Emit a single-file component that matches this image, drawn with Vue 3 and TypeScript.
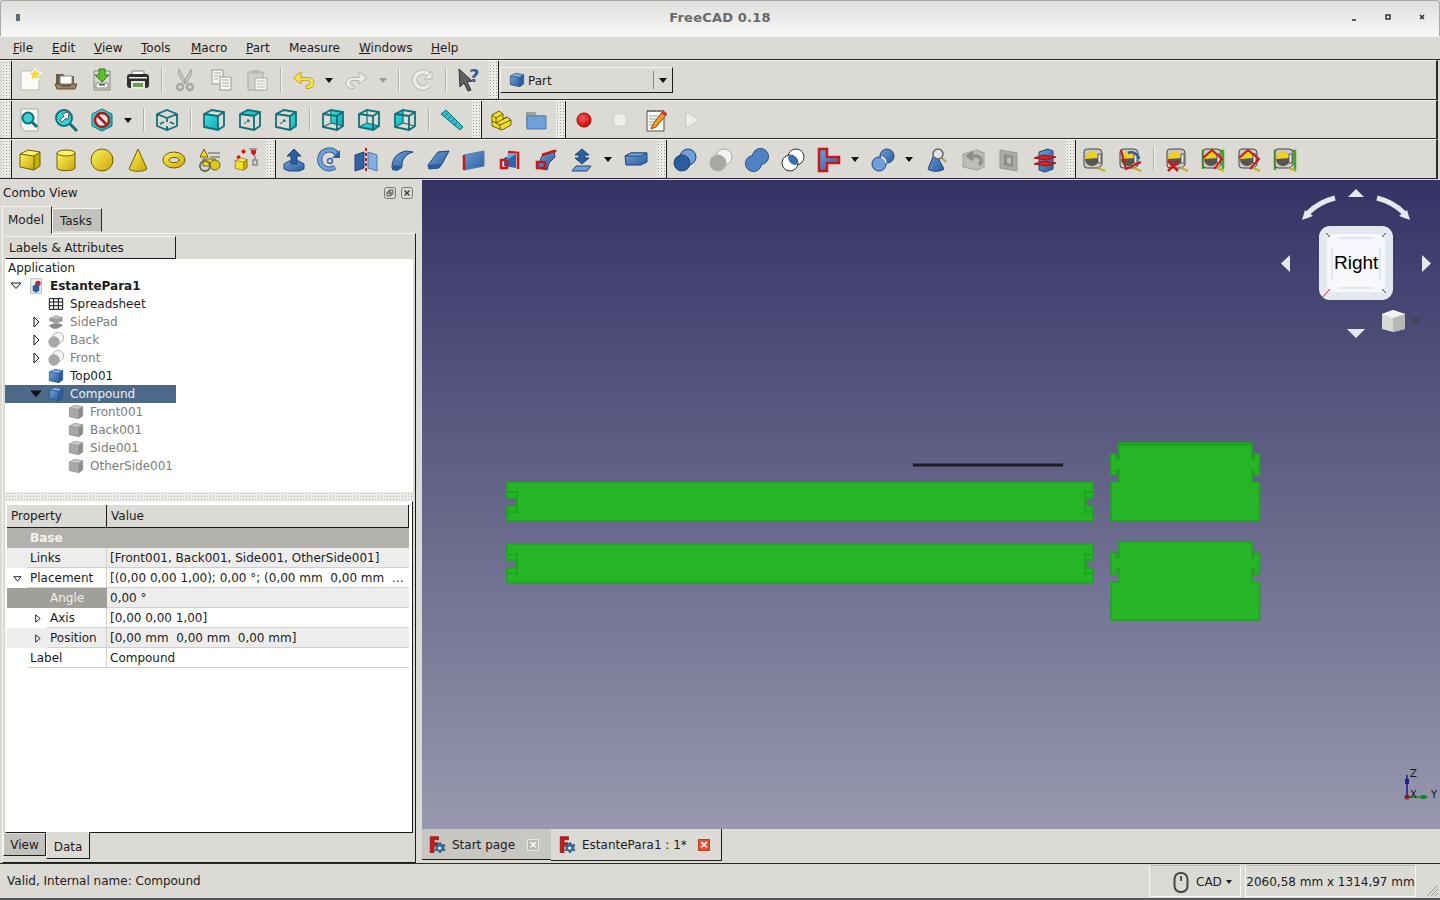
<template>
  <div class="window">
    <svg class="defs" width="0" height="0">
      <defs>
        <linearGradient id="gy" x1="0" y1="0" x2="1" y2="1"><stop offset="0" stop-color="#fff35e" /><stop offset="1" stop-color="#c9a506" /></linearGradient>
        <linearGradient id="gb" x1="0" y1="0" x2="1" y2="1"><stop offset="0" stop-color="#6f9fd8" /><stop offset="1" stop-color="#2a5c9e" /></linearGradient>
        <linearGradient id="gt" x1="0" y1="0" x2="1" y2="1"><stop offset="0" stop-color="#3fe4e4" /><stop offset="1" stop-color="#14a4ac" /></linearGradient>
        <radialGradient id="gr" cx="0.4" cy="0.35" r="0.7"><stop offset="0" stop-color="#ff5a5a" /><stop offset="1" stop-color="#c40000" /></radialGradient>
      </defs>
    </svg>

    <header class="titlebar">
      <span class="app-mark"></span>
      <span class="title">FreeCAD 0.18</span>
      <div class="win-buttons">
        <svg width="10" height="10" viewBox="0 0 10 10"><path d="M3 8h4" stroke="#333" stroke-width="1.6" /></svg>
        <svg width="10" height="10" viewBox="0 0 10 10"><path d="M3 3h4v4H3z" fill="none" stroke="#333" stroke-width="1.5" /></svg>
        <svg width="10" height="10" viewBox="0 0 10 10"><path d="M3 3l4 4M7 3l-4 4" stroke="#333" stroke-width="1.6" /></svg>
      </div>
    </header>

    <nav class="menubar">
      <span v-for="m in menus" :key="m.label" class="menu-item" :style="{ width: m.width + 'px' }"><u v-if="m.key">{{ m.label[0] }}</u>{{ m.key ? m.label.slice(1) : m.label }}</span>
    </nav>

    <div v-for="(bar, i) in toolbars" :key="i" class="toolbar" :class="'bar' + i">
      <template v-for="(item, j) in bar" :key="j">
        <span v-if="item === '#'" class="handle"></span>
        <span v-else-if="item === '##'" class="handle wide"></span>
        <span v-else-if="item === '|'" class="sep"></span>
        <span v-else-if="item === '|-'" class="sep narrow"></span>
        <span v-else-if="item === 'v'" class="drop"></span>
        <span v-else-if="item === 'v-'" class="drop dim"></span>
        <div v-else-if="item === 'combo'" class="combo-box">
          <svg class="ico16" viewBox="0 0 24 24" v-html="icons.cube"></svg>
          <span class="combo-text">Part</span>
          <span class="combo-arrow"></span>
        </div>
        <span v-else class="tool"><svg class="ico" viewBox="0 0 24 24" v-html="icons[item]"></svg></span>
      </template>
    </div>

    <div class="main">
      <aside class="combo">
        <div class="combo-title">
          <span>Combo View</span>
          <div class="dock-buttons">
            <svg width="12" height="12" viewBox="0 0 12 12"><rect x="0.5" y="0.5" width="11" height="11" rx="2" fill="none" stroke="#777" /><path d="M5 3h4v4H5zM3 5h4v4H3z" fill="none" stroke="#555" /></svg>
            <svg width="12" height="12" viewBox="0 0 12 12"><rect x="0.5" y="0.5" width="11" height="11" rx="2" fill="none" stroke="#777" /><path d="M3.5 3.5l5 5M8.5 3.5l-5 5" stroke="#444" stroke-width="1.5" /></svg>
          </div>
        </div>
        <div class="top-tabs">
          <span class="top-tab active">Model</span>
          <span class="top-tab">Tasks</span>
        </div>
        <div class="pane">
          <div class="tree-block">
            <div class="tree-head">Labels &amp; Attributes</div>
            <div class="tree">
              <div class="tree-app">Application</div>
              <div
                v-for="row in tree"
                :key="row.label"
                class="tree-row"
                :style="{ paddingLeft: (row.level - 1) * 20 + 1 + 'px' }"
              >
                <span class="tree-cell" :class="{ selected: row.selected }">
                  <span class="twist">
                    <svg v-if="row.twist" width="10" height="10" viewBox="0 0 10 10"><path :d="row.twist === 'right' ? 'M3 0l5 5-5 5z' : 'M0 2h10L5 7.500z'" :fill="row.selected ? '#111' : '#fff'" stroke="#111" /></svg>
                  </span>
                  <svg class="ico16" viewBox="0 0 24 24" v-html="icons[row.icon]"></svg>
                  <span class="tree-label" :class="{ bold: row.bold, grey: row.grey }">{{ row.label }}</span>
                </span>
              </div>
            </div>
          </div>
          <div class="splitter"></div>
          <div class="prop-frame">
            <div class="prop-head">
              <span class="prop-col1">Property</span>
              <span class="prop-col2">Value</span>
            </div>
            <div class="prop-group">Base</div>
            <div v-for="p in props" :key="p.name" class="prop-row" :class="{ alt: p.alt, picked: p.picked }">
              <span class="prop-name" :style="{ paddingLeft: p.level * 20 + 'px' }">
                <span class="prop-twist">
                  <svg v-if="p.twist" width="9" height="9" viewBox="0 0 10 10"><path :d="p.twist === 'right' ? 'M3 1l5 4-5 4z' : 'M1 3h8L5 8z'" fill="#fff" stroke="#111" /></svg>
                </span>
                <span class="prop-label">{{ p.name }}</span>
              </span>
              <span class="prop-value">{{ p.value }}</span>
            </div>
          </div>
          <div class="low-tabs">
            <span class="low-tab">View</span>
            <span class="low-tab active">Data</span>
          </div>
        </div>
      </aside>

      <section class="view-col">
        <div class="viewport">
          <svg class="parts" viewBox="422 180 1018 649">
            <g class="solid">
              <path v-for="d in solids" :key="d" :d="d" />
            </g>
            <g class="inner">
              <path v-for="d in innerLines" :key="d" :d="d" />
            </g>
            <path d="M913 465H1063" stroke="#1c1c1c" stroke-width="3" />
          </svg>

          <svg class="navi" viewBox="1270 180 170 170">
            <g fill="#e4e9f0">
              <path d="M1348 197l8-8 8 8zM1347 329h18l-9 9zM1290 255v17l-9-8.500zM1422 255v17l9-8.500z" />
              <path d="M1302 220l3-10 8 6zM1410 220l-3-10-8 6z" />
              <rect x="1319" y="226" width="74" height="74" rx="11" />
            </g>
            <path d="M1335 198q-16 4-27 15M1377 198q16 4 27 15" fill="none" stroke="#e4e9f0" stroke-width="5" />
            <path d="M1332 234h48l5 5v48l-5 5h-48l-5-5v-48z" fill="#f6f8fc" />
            <path d="M1339 238h34M1339 288h34M1332 247v32M1380 247v32" stroke="#cfd3e6" fill="none" />
            <path d="M1326 233l4 4M1386 233l-4 4M1386 293l-4-4" stroke="#3a3a6e" />
            <path d="M1330 289l-11 12" stroke="#d02030" />
            <path d="M1316 299l5 5M1321 299l-5 5" stroke="#e01010" />
            <path d="M1382 314l11-4 12 4v15l-12 3-11-3z" fill="#d8d8d4" />
            <path d="M1393 318l12-4v15l-12 3z" fill="#b8b8b4" />
            <path d="M1382 314l11-4 12 4-12 4z" fill="#f2f2f0" />
            <path d="M1409 317h14l-7 7z" fill="#43435a" />
          </svg>
          <span class="navi-label">Right</span>

          <svg class="axes" width="44" height="46" viewBox="0 0 44 46">
            <path d="M11 36V14" stroke="#1c1c96" stroke-width="1.500" />
            <path d="M11 36H32" stroke="#118a22" stroke-width="1.500" />
            <rect x="9" y="18" width="4" height="5" fill="#1c1c96" />
            <rect x="25" y="34" width="5" height="4" fill="#118a22" />
            <circle cx="11" cy="36" r="2.500" fill="#8a1c2a" />
            <text x="14" y="16" class="axis-text">Z</text>
            <text x="14" y="37" class="axis-text">X</text>
            <text x="35" y="37" class="axis-text">Y</text>
          </svg>
        </div>
        <div class="doc-tabs">
          <div class="doc-tab">
            <svg class="ico18" viewBox="0 0 24 24" v-html="icons.fclogo"></svg>
            <span>Start page</span>
            <span class="close"></span>
          </div>
          <div class="doc-tab active">
            <svg class="ico18" viewBox="0 0 24 24" v-html="icons.fclogo"></svg>
            <span>EstantePara1 : 1*</span>
            <span class="close red"></span>
          </div>
        </div>
      </section>
    </div>

    <footer class="statusbar">
      <span class="status-text">Valid, Internal name: Compound</span>
      <div class="status-box nav-style">
        <svg width="16" height="21" viewBox="0 0 16 21"><rect x="1.500" y="1" width="13" height="19" rx="6" fill="none" stroke="#444" stroke-width="2" /><path d="M8 4v5" stroke="#444" stroke-width="1.800" /></svg>
        <span>CAD</span>
        <span class="mini-arrow"></span>
      </div>
      <div class="status-box size-box">2060,58 mm x 1314,97 mm</div>
      <svg class="grip" width="14" height="14" viewBox="0 0 14 14"><path d="M13 2L2 13M13 6l-7 7M13 10l-3 3" stroke="#999" /></svg>
    </footer>
  </div>
</template>

<script setup lang="ts">
interface TreeRow {
  label: string;
  level: number;
  icon: string;
  twist?: 'right' | 'down';
  bold?: boolean;
  grey?: boolean;
  selected?: boolean;
}

interface PropRow {
  name: string;
  value: string;
  level: number;
  twist?: 'right' | 'down';
  alt?: boolean;
  picked?: boolean;
}

const menus = [
  { label: 'File', key: true, width: 39 },
  { label: 'Edit', key: true, width: 42 },
  { label: 'View', key: true, width: 47 },
  { label: 'Tools', key: true, width: 50 },
  { label: 'Macro', key: true, width: 55 },
  { label: 'Part', key: true, width: 43 },
  { label: 'Measure', key: false, width: 70 },
  { label: 'Windows', key: true, width: 72 },
  { label: 'Help', key: true, width: 40 },
];

// '#' grip, '|' separator, 'v' small dropdown arrow, the rest are icon names
const toolbars: string[][] = [
  ['#', 'new', 'open', 'save', 'print', '|', 'cut', 'copy', 'paste', '|-', 'undo', 'v', 'redo', 'v-', '|', 'refresh', '|', 'whatsthis', '#', 'combo'],
  ['#', 'fitall', 'fitsel', 'nodraw', 'v', '|', 'iso', '|', 'vfront', 'vtop', 'vright', '|', 'vrear', 'vbottom', 'vleft', '|', 'ruler', '#', 'struct', 'folder', '#', 'rec', 'stop', 'macro', 'play'],
  ['#', 'ybox', 'ycyl', 'ysphere', 'ycone', 'ytorus', 'prims', 'builder', '#', 'extrude', 'revolve', 'mirror', 'fillet', 'chamfer', 'ruled', 'loft', 'sweep', 'offset', 'v', 'thick', '##', 'boolean', 'bcut', 'fuse', 'common', 'tee', 'v', 'split', 'v', 'check', 'defeat', 'gshell', 'xsection', '##', 'tape', 'tapeangle', '|', 'tapeclear', 'tapetoggle', 'tapedelta', 'tapeall'],
];

const box = (a: string, b: string, c: string, s: string) =>
  `<path fill="${a}" d="M2 6 16 8V22L2 19Z"/><path fill="${b}" d="M2 6 10 2 22 4 16 8Z"/><path fill="${c}" d="M16 8 22 4V18L16 22Z"/><path fill="none" stroke="${s}" d="M2 6 10 2 22 4V18L16 22 2 19ZM2 6 16 8 22 4M16 8V22"/>`;

const viewCube = (faces: string, extra = '') =>
  `<path fill="url(#gt)" d="${faces}"/><path fill="none" stroke="#0e7078" stroke-width="1.800" d="M2 6 10 2 22 4V18L16 22 2 19ZM2 6 16 8 22 4M16 8V22"/>${extra}`;

const hidden = '<path fill="none" stroke="#0e7078" stroke-width="1.200" d="M10 2V15L2 19M10 15 22 18"/>';

const circles = (a: string, b: string, s: string, extra = '') =>
  `<circle cx="15" cy="9" r="8" fill="${b}" stroke="${s}"/><circle cx="9" cy="15" r="8" fill="${a}" stroke="${s}"/>${extra}`;

const tape =
  '<path fill="#c8c8c4" stroke="#444" d="M2 4q0-3 3-3h11q4 0 4 4v12l-3 3H5q-3 0-3-3z"/><circle cx="10" cy="11" r="7" fill="#555"/><path fill="#f0d020" d="M3 11a7 7 0 0 1 14-1z"/><path fill="#eee" stroke="#555" d="M16 6h3v9h-3z"/><path fill="none" stroke="#c8b020" stroke-width="2.200" d="M16 20l7 3"/>';

const icons: Record<string, string> = {
  cube: box('url(#gb)', '#7fabe0', '#2c5f9f', '#1f4678'),
  gcube: box('#a8a8a4', '#c8c8c4', '#8c8c88', '#8a8a86'),
  doc: '<path fill="#eceff2" stroke="#9a9a9a" d="M4 1h16v22H4z"/><circle cx="15" cy="8" r="4" fill="#c81e1e"/>' + '<path fill="#2a5c9e" d="M7 12l5-3 5 3v7l-5 3-5-3z"/>',
  sheet: '<path fill="#fff" stroke="#111" stroke-width="1.500" d="M2 4h20v16H2zM2 9h20M2 14.500h20M8.500 4v16M15.500 4v16"/>',
  gpad: '<path fill="#9c9c98" d="M2 6l10-4 10 3v6l-10 3-10-3z"/><path fill="#bcbcb8" d="M2 6l10-4 10 3-10 3z"/><path fill="#8a8a86" d="M1 17l8-3h7l7 3-9 5H7z"/>',
  gbool: '<circle cx="15" cy="9" r="8.500" fill="#f4f4f2" stroke="#999"/><circle cx="9" cy="15" r="8.500" fill="#a8a8a4"/>',

  new: '<path fill="#fafaf8" stroke="#bcbcb4" d="M3 3H16L21 8V22H3Z"/><path fill="#f7d938" stroke="#fff" d="M17 0l2 4 4.500.600-3.300 3.100.800 4.300-4-2-4 2 .800-4.300L10.500 4.600 15 4z"/>',
  open: '<path fill="#6b5a44" d="M2 6h7l2 2h9v12H2z"/><path fill="#fff" stroke="#888" d="M6 8h12v8H6z"/><path fill="#9a8262" stroke="#5e4c36" d="M1 16h6l1 2h8l1-2h6l-2 5H3z"/>',
  save: '<path fill="#d8d8d4" stroke="#8a8a84" d="M4 3h16v19H4z"/><path fill="#f4f4f0" stroke="#8a8a84" d="M6 15h12v5H6z"/><path fill="#555" d="M9 16h6v1.500H9z"/><path fill="#5cc02e" stroke="#2e7d14" d="M9 1h6v6h4l-7 7-7-7h4z"/>',
  print: '<path fill="#fff" stroke="#777" d="M6 3h12v5H6z"/><path fill="#2e2e2e" d="M1 9q0-3 3-3h16q3 0 3 3v8q0 3-3 3H4q-3 0-3-3z"/><path fill="#eee" d="M3 9h18v1.500H3z"/><path fill="#e6ebe0" d="M5 13h14v8H5z"/><path fill="#6a9a50" d="M7 15h10v4H7z"/>',
  cut: '<g stroke="#a8a8a4" fill="none" stroke-width="2.500"><circle cx="7" cy="19" r="3"/><circle cx="17" cy="19" r="3"/></g><path fill="#c8c8c4" stroke="#a0a09c" d="M6 1l7 13-2 2L5 5zM18 1l-7 13 2 2 6-11z"/>',
  copy: '<g fill="#f6f6f4" stroke="#9c9c98"><path d="M3 2h11v14H3z"/><path d="M11 9h11v13H11z"/></g><path stroke="#aaa" d="M5 5h7M5 8h7M5 11h4M13 12h7M13 15h7M13 18h7"/>',
  paste: '<path fill="#cfcfcb" stroke="#aaa" d="M3 4h15v18H3z"/><path fill="#b8b8b4" d="M7 2h7v4H7z"/><path fill="#f4f4f2" stroke="#aaa" d="M10 10h12v12H10z"/><path stroke="#bbb" d="M12 13h8M12 16h8M12 19h8"/>',
  undo: '<path fill="#f6df50" stroke="#c6a61c" d="M10 4L2 10l8 6v-3.500h6q3 0 3 2.500t-3 2.500h-1v3h2q6-.500 6-5.500t-6-5.500h-7z"/>',
  redo: '<path transform="translate(24,0) scale(-1,1)" fill="#ecece8" stroke="#b4b4b0" d="M10 4L2 10l8 6v-3.500h6q3 0 3 2.500t-3 2.500h-1v3h2q6-.500 6-5.500t-6-5.500h-7z"/>',
  refresh: '<path fill="none" stroke="#b8b8b4" stroke-width="5.500" d="M19 17a8 8 0 1 1 0-10"/><path fill="none" stroke="#ecece8" stroke-width="3.500" d="M19 17a8 8 0 1 1 0-10"/><path fill="#ecece8" stroke="#b8b8b4" d="M22 3v8h-8z"/>',
  whatsthis: '<path fill="#5c6064" stroke="#333" d="M2 1l13 12-5 1 4 8-3 1-4-8-4 4z"/><text x="12" y="14" font-family="DejaVu Sans" font-weight="700" font-size="18" fill="#2f5f99">?</text>',

  fitall: '<path fill="#f6f6f4" stroke="#aaa" d="M3 1h17v22H7l-4-4z"/><circle cx="10" cy="10" r="5.500" fill="#38d0d4" stroke="#0e7078" stroke-width="2"/><path stroke="#0e7078" stroke-width="3" d="M14 14l5 5"/>',
  fitsel: '<circle cx="10" cy="10" r="8" fill="#38d0d4" stroke="#0e7078" stroke-width="2"/><path stroke="#0e7078" stroke-width="3" d="M16 16l7 7"/><path fill="#fff" stroke="#555" d="M15 4l-1 8-2-2-4 4-2-2 4-4-2-2z"/>',
  nodraw: '<path fill="url(#gt)" stroke="#0e7078" d="M12 1l10 5v12l-10 5L2 18V6z"/><circle cx="12" cy="12" r="7" fill="#d8e6e8" stroke="#b01818" stroke-width="2.500"/><path stroke="#b01818" stroke-width="2.500" d="M7 7l10 10"/>',
  iso: '<path fill="none" stroke="#0e7078" stroke-width="1.800" d="M12 2l10 4v12l-10 4-10-4V6zM2 6l10 4 10-4M12 10v4M12 22v-4M5 16l4-2M19 16l-4-2"/>',
  vfront: viewCube('M2 6 16 8V22L2 19Z'),
  vtop: viewCube('M2 6 10 2 22 4 16 8Z', '<path stroke="#0e7078" d="M6 16l5-4M9 12h2v2"/>'),
  vright: viewCube('M16 8 22 4V18L16 22Z', '<path stroke="#0e7078" d="M6 16l5-4M9 12h2v2"/>'),
  vrear: viewCube('M10 2 22 4V18L10 15Z', hidden),
  vbottom: viewCube('M2 19 10 15 22 18 16 22Z', hidden),
  vleft: viewCube('M2 6 10 2V15L2 19Z', hidden),
  ruler: '<path fill="#2cc4c8" stroke="#0e7078" d="M1 6l5-4 17 17-3 3z"/><path stroke="#0e7078" d="M5 8l3-3M8 11l3-3M11 14l3-3M14 17l3-3"/>',
  struct: '<path fill="#f0dc2c" stroke="#6a6000" d="M4 7l7-4 4 3v5l4-2 4 3v5l-9 5-10-4z"/><path fill="none" stroke="#6a6000" d="M4 7l4 3 7-4M8 10v5l11-6M8 15l-4-2M12 17l11-5M12 17v5M8 15l4 2"/>',
  folder: '<path fill="#9c9c98" d="M2 4h9l2 3h8v12H2z"/><path fill="#6fa0d8" stroke="#4d7bb0" d="M3 8h19v13H3z"/>',
  rec: '<circle cx="12" cy="12" r="7" fill="url(#gr)" stroke="#a80000" />',
  stop: '<rect x="6" y="6" width="12" height="12" fill="#eeeeea" stroke="#cfcfcb"/>',
  macro: '<path fill="#fafaf6" stroke="#555" d="M3 3h17v20H3z"/><path stroke="#666" stroke-dasharray="1.500 1" stroke-width="2" d="M3 3h17"/><path stroke="#999" d="M5 8h12M5 11h10M5 14h8M5 17h8"/><path fill="#f09a28" stroke="#8a5010" d="M19 3l4 3-11 13-5 2 2-5z"/><path fill="#e03030" d="M19 3l4 3-2 2-4-3z"/>',
  play: '<path fill="#eeeeea" stroke="#c8c8c4" d="M6 4l14 8-14 8z"/>',

  ybox: box('url(#gy)', '#fdf26a', '#c8ae08', '#6a6000'),
  ycyl: '<path fill="url(#gy)" stroke="#6a6000" d="M3 5v15c0 3.500 18 3.500 18 0V5z"/><ellipse cx="12" cy="5" rx="9" ry="3" fill="#fdf26a" stroke="#6a6000"/>',
  ysphere: '<circle cx="12" cy="12" r="11" fill="url(#gy)" stroke="#6a6000"/>',
  ycone: '<path fill="url(#gy)" stroke="#6a6000" d="M12 1L3 21c3 3 15 3 18 0z"/>',
  ytorus: '<ellipse cx="12" cy="12" rx="11" ry="8" fill="url(#gy)" stroke="#6a6000"/><ellipse cx="12" cy="12" rx="5" ry="2.500" fill="#dcdad5" stroke="#6a6000"/>',
  prims: '<path fill="#f0dc2c" stroke="#6a6000" d="M6 1l4 8H2z"/><path stroke="#999" stroke-width="2" d="M10 5h12M12 9h10"/><path fill="#f0dc2c" stroke="#6a6000" d="M5 11h12v7H5z"/><circle cx="17" cy="17" r="5" fill="#e0c820" stroke="#6a6000"/><circle cx="7" cy="18" r="5" fill="none" stroke="#666" stroke-width="2"/>',
  builder: box('#f4e22a', '#fdf26a', '#c8ae08', '#6a6000').replace(/<path/g, '<path transform="translate(0,9) scale(.6)"') + '<path fill="#d81818" d="M7 3l3-2 2 3-3 2zM17 2h5v3l-2 3-3-3zM2 9l3-2 2 2-3 2z"/><path fill="none" stroke="#888" stroke-width="1.500" d="M15 1h8M19 12h4v5h-4zM21 8v4"/>',

  extrude: '<path fill="url(#gb)" stroke="#1f4678" d="M2 16l5-3h10l5 3v5l-5 2H7l-5-2z"/><path fill="#2c5f9f" stroke="#1f4678" d="M12 1l7 7h-4v8H9V8H5z"/>',
  revolve: '<path fill="none" stroke="#1f4678" stroke-width="5" d="M17 19A9.500 9.500 0 1 1 19 6"/><path fill="none" stroke="#6f9fd8" stroke-width="3.500" d="M17 19A9.500 9.500 0 1 1 19 6"/><path fill="#2c5f9f" d="M22 2v8h-8z"/><circle cx="12" cy="13" r="2.500" fill="none" stroke="#3a70b0" stroke-width="1.500"/>',
  mirror: '<path fill="#2f63a5" stroke="#1f4678" d="M1 7l9-3v16l-9 3z"/><path fill="#86afe0" stroke="#4d7bb0" d="M14 4l9 3v16l-9-3z"/><path stroke="#c81818" stroke-width="2" stroke-dasharray="3 2" d="M12 0v24"/>',
  fillet: '<path fill="url(#gb)" stroke="#1f4678" d="M2 20c0-10 5-15 14-17l7 1c-7 2-11 7-11 13v2l-5 3z"/><path fill="#2a5c9e" d="M2 17l10 1v2l-5 3-5-1z"/>',
  chamfer: '<path fill="url(#gb)" stroke="#1f4678" d="M2 17L12 4l11-1-7 13-3 4-10 1z"/><path fill="#2a5c9e" d="M2 17l14-1-3 4-10 1z"/>',
  ruled: '<path fill="url(#gb)" stroke="#4d7bb0" d="M2 7l20-4v15L2 22z"/><path stroke="#c81818" stroke-width="2.500" d="M2 7v15"/>',
  loft: '<path fill="#2f63a5" d="M6 10L18 5v15l-12-2z"/><path fill="none" stroke="#c81818" stroke-width="2.500" d="M10 4l10 1v16M3 12h6v8H3z"/><path fill="#6f9fd8" d="M10 5l10 0-11 7z"/>',
  sweep: '<path fill="url(#gb)" stroke="#1f4678" d="M3 20L8 8l12-5 1 6-6 6-2 7z"/><path fill="none" stroke="#c81818" stroke-width="2.500" d="M8 7l12-4M3 14h8v6H3z"/><circle cx="21" cy="3" r="1.500" fill="#c81818"/>',
  offset: '<path fill="#2c5f9f" stroke="#1f4678" d="M12 1l7 6h-4v3h4l-7 6-7-6h4V7H5z"/><path fill="#6f9fd8" stroke="#1f4678" d="M6 18h15l-4 5H2z"/>',
  thick: '<path fill="url(#gb)" stroke="#1f4678" d="M1 8l6-3h16v9l-6 3H2z"/><path fill="#7fabe0" stroke="#1f4678" d="M1 8l6-3h16l-6 3z"/>',
  boolean: circles('#2a5c9e', '#6f9fd8', '#1f4678'),
  bcut: circles('#a8a8a4', '#f4f4f2', '#aaa'),
  fuse: '<circle cx="15.500" cy="8.500" r="8" fill="#4f82c2" stroke="#1f4678"/><circle cx="8.500" cy="15.500" r="8" fill="#4f82c2" stroke="#1f4678"/><circle cx="15.500" cy="8.500" r="7.400" fill="#4f82c2"/><circle cx="8.500" cy="15.500" r="7.400" fill="#4f82c2"/>',
  common: '<circle cx="15" cy="9" r="8" fill="#fff" stroke="#333"/><circle cx="9" cy="15" r="8" fill="#fff" stroke="#333"/><path fill="#3a70b0" d="M9 7a8 8 0 0 1 8 8 8 8 0 0 1-2 2 8 8 0 0 1-8-8z"/>',
  tee: '<path fill="url(#gb)" stroke="#c81818" stroke-width="2.500" d="M2 1h8v8h12v6H10v8H2z"/>',
  split: '<circle cx="16" cy="8" r="7" fill="url(#gb)" stroke="#1f4678"/><circle cx="8" cy="16" r="7" fill="#6f9fd8" stroke="#1f4678"/><path fill="none" stroke="#fff" stroke-width="1.500" d="M10 9a7 7 0 0 1 5 6"/>',
  check: '<path fill="url(#gb)" stroke="#1f4678" d="M10 4L3 21c3 3 13 3 16 0z"/><circle cx="13" cy="6" r="5" fill="#dde4ea" stroke="#666" stroke-width="1.500"/><path stroke="#b09a30" stroke-width="2" d="M17 10l4 4"/>',
  defeat: '<path fill="#bcbcb8" stroke="#a0a09c" d="M2 6l14-4 7 3v14l-7 3-14-3z"/><path fill="none" stroke="#8c8c88" stroke-width="3" d="M18 17a5 5 0 0 0-2-9H8M12 4L7 8l5 4"/>',
  gshell: '<path fill="#a8a8a4" stroke="#999" d="M3 2l17 3v18L3 20z"/><path fill="#8c8c88" d="M7 6l9 2v11l-9-2z"/><path fill="#bcbcb8" d="M10 9l4 1v6l-4-1z"/>',
  xsection: '<path fill="url(#gb)" stroke="#1f4678" d="M6 4l9-3 5 2v18l-8 3-6-2z"/><path fill="#e02020" stroke="#a01010" d="M1 10l9-3 13 2-9 3zM1 16l9-3 13 2-9 3z"/>',

  tape,
  tapeangle: tape + '<path fill="none" stroke="#c81818" stroke-width="2" d="M3 2l5 19 15-7"/><path fill="none" stroke="#2f5f99" stroke-width="2.500" d="M10 5a8 8 0 0 1 11 6"/>',
  tapeclear: tape + '<path stroke="#c81818" stroke-width="2.500" d="M3 13l10 10M13 13L3 23"/>',
  tapetoggle: '<path fill="none" stroke="#3fa81c" stroke-width="2.500" d="M2 21V3h20v18"/>' + tape + '<path fill="none" stroke="#c81818" stroke-width="2" d="M2 10l9-8 10 9-8 10"/>',
  tapedelta: tape + '<path fill="none" stroke="#c81818" stroke-width="2" d="M2 10l9-8 11 9-9 10"/>',
  tapeall: '<path fill="none" stroke="#3fa81c" stroke-width="2.500" d="M2 22V3h20v19"/>' + tape,

  fclogo: '<path fill="#d01818" stroke="#801010" d="M3 1h11v4H8v4h5v4H8v9H3z"/><path fill="#3a6ca8" stroke="#1f4678" d="M15 9l2 0 .500 2 2 1 2-1 1 2-1.500 1.500v2l1.500 1.500-1 2-2-1-2 1-.500 2h-2l-.500-2-2-1-2 1-1-2 1.500-1.500v-2L9 13l1-2 2 1 2-1z"/><circle cx="15.500" cy="16" r="2" fill="#fff"/>',
};

const tree: TreeRow[] = [
  { label: 'EstantePara1', level: 1, icon: 'doc', twist: 'down', bold: true },
  { label: 'Spreadsheet', level: 2, icon: 'sheet' },
  { label: 'SidePad', level: 2, icon: 'gpad', twist: 'right', grey: true },
  { label: 'Back', level: 2, icon: 'gbool', twist: 'right', grey: true },
  { label: 'Front', level: 2, icon: 'gbool', twist: 'right', grey: true },
  { label: 'Top001', level: 2, icon: 'cube' },
  { label: 'Compound', level: 2, icon: 'cube', twist: 'down', selected: true },
  { label: 'Front001', level: 3, icon: 'gcube', grey: true },
  { label: 'Back001', level: 3, icon: 'gcube', grey: true },
  { label: 'Side001', level: 3, icon: 'gcube', grey: true },
  { label: 'OtherSide001', level: 3, icon: 'gcube', grey: true },
];

const props: PropRow[] = [
  { name: 'Links', value: '[Front001, Back001, Side001, OtherSide001]', level: 1, alt: true },
  { name: 'Placement', value: '[(0,00 0,00 1,00); 0,00 °; (0,00 mm  0,00 mm  …', level: 1, twist: 'down' },
  { name: 'Angle', value: '0,00 °', level: 2, alt: true, picked: true },
  { name: 'Axis', value: '[0,00 0,00 1,00]', level: 2, twist: 'right' },
  { name: 'Position', value: '[0,00 mm  0,00 mm  0,00 mm]', level: 2, twist: 'right', alt: true },
  { name: 'Label', value: 'Compound', level: 1 },
];

const bar = (y: number) => {
  const t = y;
  const b = y + 39;
  const upper = t + 16;
  const lower = t + 24;
  return (
    `M507 ${t}H1093V${upper}H1086V${lower}H1093V${b}H507V${lower}H516V${upper}H507Z`
  );
};

const block = (top: number, step: number, bottom: number) => {
  const a = top + 11;
  const n1 = top + 16;
  const n2 = top + 27;
  const c = top + 32;
  return (
    `M1119 ${top}H1252V${n1}H1254V${a}H1259.500V${c}H1254V${n2}H1252V${step}H1259.500V${bottom}H1111V${step}H1119V${n2}H1116V${c}H1111V${a}H1116V${n1}H1119Z`
  );
};

const solids = [bar(482), bar(544), block(443, 482, 521), block(542, 582, 620)];

const innerLines = [
  'M507 492H517V512H507',
  'M507 554H517V574H507',
  'M1093 492H1085V512H1093',
  'M1093 554H1085V574H1093',
  'M1119 445H1252',
];
</script>

<style>
html,
body {
  margin: 0;
  background: #dcdad5;
}
</style>

<style scoped>
.window {
  width: 1440px;
  height: 900px;
  box-sizing: border-box;
  display: flex;
  flex-direction: column;
  overflow: hidden;
  position: relative;
  background: #dcdad5;
  color: #1c1c1c;
  font-family: "DejaVu Sans", sans-serif;
  font-size: 12px;
}

.defs {
  position: absolute;
}

.titlebar {
  height: 36px;
  flex: none;
  box-sizing: border-box;
  display: flex;
  align-items: center;
  justify-content: center;
  position: relative;
  border: 1px solid #a8a8a4;
  border-bottom: 0;
  border-radius: 4px 4px 0 0;
  background: linear-gradient(#dfdfdd, #f7f7f6);
}

.app-mark {
  position: absolute;
  left: 15px;
  top: 13px;
  width: 4px;
  height: 7px;
  background: #5b6b78;
}

.title {
  font-weight: 700;
  font-size: 13px;
  letter-spacing: 0.2px;
  color: #6a6a6a;
  margin-top: -3px;
}

.win-buttons {
  position: absolute;
  right: 12px;
  top: 11px;
  display: flex;
  gap: 24px;
}

.menubar {
  height: 24px;
  flex: none;
  box-sizing: border-box;
  padding-left: 4px;
  display: flex;
  align-items: center;
  border-top: 1px solid #f4f4f2;
  border-bottom: 1px solid #2a2a2a;
}

.menu-item {
  box-sizing: border-box;
  padding-left: 9px;
  flex: none;
}

.toolbar {
  height: 40px;
  flex: none;
  box-sizing: border-box;
  display: flex;
  align-items: stretch;
  border-top: 1px solid #f4f3f0;
  border-bottom: 1px solid #2a2a2a;
  border-right: 2px solid #2a2a2a;
  margin-right: 2px;
}

.toolbar.bar1 {
  height: 39px;
}

.toolbar.bar2 {
  height: 40px;
}

.toolbar.bar2 .tool {
  padding-top: 1px;
}

.handle {
  width: 9px;
  flex: none;
  margin-left: 2px;
  border-right: 1px solid #1c1c1c;
  background-color: #ecebe7;
  background-image: radial-gradient(#9a9a96 0.6px, transparent 0.7px);
  background-size: 3px 3px;
}

.handle.wide {
  margin-left: 3px;
}

.sep {
  width: 11px;
  flex: none;
  position: relative;
}

.sep.narrow {
  width: 10px;
}

.sep::after {
  content: "";
  position: absolute;
  left: 5px;
  top: 7px;
  bottom: 7px;
  width: 1px;
  background: #b0aea9;
  box-shadow: 1px 0 0 #f4f3f0;
}

.tool {
  width: 36px;
  flex: none;
  display: flex;
  align-items: center;
  justify-content: center;
}

.ico {
  width: 24px;
  height: 24px;
  display: block;
  overflow: visible;
}

.ico16 {
  width: 16px;
  height: 16px;
  flex: none;
  display: block;
}

.ico18 {
  width: 18px;
  height: 18px;
  flex: none;
  display: block;
}

.drop {
  width: 18px;
  flex: none;
  position: relative;
}

.drop::after {
  content: "";
  position: absolute;
  left: 4px;
  top: 50%;
  margin-top: -2px;
  border-left: 4.5px solid transparent;
  border-right: 4.5px solid transparent;
  border-top: 5px solid #111;
}

.drop.dim::after {
  border-top-color: #9c9c98;
}

.combo-box {
  width: 173px;
  height: 26px;
  align-self: center;
  flex: none;
  box-sizing: border-box;
  display: flex;
  align-items: center;
  margin-left: 1px;
  padding-left: 8px;
  position: relative;
  border: 1px solid;
  border-color: #f6f5f2 #1c1c1c #1c1c1c #f6f5f2;
}

.combo-text {
  margin-left: 3px;
  padding-top: 2px;
}

.combo-arrow {
  position: absolute;
  left: 152px;
  top: 3px;
  bottom: 3px;
  width: 20px;
  border-left: 1px solid #8a8a86;
}

.combo-arrow::after {
  content: "";
  position: absolute;
  left: 5px;
  top: 7px;
  border-left: 4.5px solid transparent;
  border-right: 4.5px solid transparent;
  border-top: 5px solid #111;
}

.main {
  flex: 1;
  min-height: 0;
  display: flex;
  margin-top: 1px;
}

.combo {
  width: 416px;
  flex: none;
  display: flex;
  flex-direction: column;
}

.combo-title {
  height: 25px;
  flex: none;
  display: flex;
  align-items: center;
  justify-content: space-between;
  padding: 0 3px;
}

.dock-buttons {
  display: flex;
  gap: 5px;
  margin-right: 0;
}

.top-tabs {
  height: 28px;
  flex: none;
  display: flex;
  align-items: flex-end;
  padding-left: 2px;
}

.top-tab {
  height: 24px;
  width: 50px;
  box-sizing: border-box;
  display: flex;
  align-items: center;
  justify-content: center;
  padding: 2px 2px 0 0;
  border: 1px solid;
  border-color: #f6f5f2 #2a2a2a #dcdad5 #f6f5f2;
  background: #c3c1bc;
  margin-bottom: 1px;
}

.top-tab.active {
  height: 28px;
  padding-top: 0;
  background: #dcdad5;
  margin-bottom: -1px;
  position: relative;
}

.pane {
  flex: 1;
  min-height: 0;
  box-sizing: border-box;
  margin-left: 2px;
  padding: 2px 2px 0 2px;
  display: flex;
  flex-direction: column;
  border-top: 1px solid #f6f5f2;
  border-left: 1px solid #f6f5f2;
  border-right: 1px solid #1c1c1c;
  border-bottom: 1px solid #1c1c1c;
}

.tree-block {
  height: 256px;
  flex: none;
  display: flex;
  flex-direction: column;
}

.tree-head {
  height: 23px;
  width: 171px;
  flex: none;
  box-sizing: border-box;
  padding-left: 3px;
  display: flex;
  align-items: center;
  border: 1px solid;
  border-color: #f6f5f2 #1c1c1c #1c1c1c #dcdad5;
}

.tree {
  flex: 1;
  background: #fff;
  padding-top: 0;
}

.tree-app {
  height: 18px;
  line-height: 18px;
  padding-left: 3px;
}

.tree-row {
  height: 18px;
  display: flex;
}

.tree-cell {
  display: flex;
  align-items: center;
  flex: 1;
}

.tree-row:has(.selected) {
  width: 171px;
  box-sizing: border-box;
  background: #4c6a88;
}

.twist {
  width: 20px;
  flex: none;
  display: flex;
  justify-content: center;
  margin-right: 2px;
}

.tree-label {
  margin-left: 6px;
  white-space: nowrap;
}

.tree-label.bold {
  font-weight: 700;
}

.tree-label.grey {
  color: #7c7c7c;
}

.selected .tree-label {
  color: #e8eef4;
}

.splitter {
  height: 9px;
  flex: none;
  background-image: radial-gradient(#b8b6b1 0.6px, transparent 0.7px);
  background-size: 3px 3px;
  background-color: #ecebe7;
}

.prop-frame {
  height: 332px;
  flex: none;
  box-sizing: border-box;
  padding: 3px 3px 3px 1px;
  border: 1px solid;
  border-color: #f6f5f2 #1c1c1c #1c1c1c #f6f5f2;
  background: #fff;
}

.prop-head {
  height: 23px;
  box-sizing: border-box;
  display: flex;
  align-items: center;
  background: #dcdad5;
  border-bottom: 1px solid #1c1c1c;
  border-right: 1px solid #1c1c1c;
}

.prop-col1 {
  width: 95px;
  padding-left: 4px;
  height: 100%;
  display: flex;
  align-items: center;
  border-right: 1px solid #1c1c1c;
}

.prop-col2 {
  padding-left: 4px;
}

.prop-group {
  height: 20px;
  line-height: 20px;
  padding-left: 23px;
  background: #b3b1ac;
  color: #f4f4f2;
  font-weight: 700;
}

.prop-row {
  height: 20px;
  display: flex;
  white-space: pre;
}

.prop-name {
  width: 100px;
  flex: none;
  box-sizing: border-box;
  display: flex;
  position: relative;
}

.prop-twist {
  position: absolute;
  margin-left: -14px;
  top: 4px;
  width: 9px;
  height: 10px;
}

.prop-label {
  flex: 1;
  padding-left: 3px;
  line-height: 21px;
  border-bottom: 1px solid #cfcfcf;
  border-right: 1px solid #cfcfcf;
}

.prop-value {
  flex: 1;
  padding-left: 3px;
  line-height: 21px;
  border-bottom: 1px solid #cfcfcf;
}

.prop-row.alt {
  background: #ededed;
}

.prop-row.picked .prop-name {
  background: #a19f9a;
}

.prop-row.picked .prop-label {
  color: #efefed;
  border-color: transparent;
}

.low-tabs {
  flex: 1;
  display: flex;
  align-items: flex-start;
  margin-left: -2px;
}

.low-tab {
  width: 43px;
  height: 23px;
  box-sizing: border-box;
  display: flex;
  align-items: center;
  justify-content: center;
  background: #c3c1bc;
  border: 1px solid;
  border-color: #dcdad5 #1c1c1c #1c1c1c #f6f5f2;
}

.low-tab.active {
  height: 27px;
  width: 44px;
  margin-top: -1px;
  background: #dcdad5;
  padding-top: 2px;
}

.view-col {
  flex: 1;
  min-width: 0;
  margin-left: 6px;
  display: flex;
  flex-direction: column;
}

.viewport {
  flex: 1;
  min-height: 0;
  position: relative;
  background: linear-gradient(#343365, #9898ae);
}

.parts {
  position: absolute;
  inset: 0;
  width: 100%;
  height: 100%;
}

.solid {
  fill: #25b526;
  stroke: #1ca61e;
  stroke-width: 1.5;
}

.inner {
  fill: none;
  stroke: #1ca61e;
  stroke-width: 2;
}

.navi {
  position: absolute;
  right: 0;
  top: 0;
  width: 170px;
  height: 170px;
}

.navi-label {
  position: absolute;
  left: 912px;
  top: 72px;
  font-family: "Liberation Sans", sans-serif;
  font-size: 19px;
  color: #000;
}

.axes {
  position: absolute;
  right: 0;
  bottom: 22px;
}

.axis-text {
  font-family: "DejaVu Sans", sans-serif;
  font-size: 10px;
  fill: #111;
}

.doc-tabs {
  height: 34px;
  flex: none;
  display: flex;
  align-items: flex-start;
}

.doc-tab {
  height: 31px;
  box-sizing: border-box;
  display: flex;
  align-items: center;
  gap: 6px;
  padding: 1px 12px 0 6px;
  width: 129px;
  background: #c9c7c2;
  border-bottom: 1px solid #1c1c1c;
}

.doc-tab.active {
  width: 171px;
  height: 32px;
  padding-right: 11px;
  padding-left: 7px;
  background: #dcdad5;
  border-right: 1px solid #1c1c1c;
  border-bottom: 1px solid #1c1c1c;
}

.close {
  width: 12px;
  height: 12px;
  margin-left: auto;
  background: #bbb9b4;
  border: 1px solid #e8e8e6;
  box-sizing: border-box;
  position: relative;
}

.close::after {
  content: "×";
  position: absolute;
  inset: 0;
  line-height: 9px;
  text-align: center;
  font-size: 11px;
  font-weight: 700;
  color: #fff;
}

.close.red {
  background: #e0553a;
  border-color: #c63b20;
}

.statusbar {
  height: 37px;
  flex: none;
  box-sizing: border-box;
  display: flex;
  align-items: center;
  position: relative;
  padding: 0 24px 0 7px;
  border-top: 1px solid #2a2a2a;
  border-bottom: 2px solid #555;
}

.status-text {
  flex: 1;
}

.status-box {
  height: 32px;
  box-sizing: border-box;
  display: flex;
  align-items: center;
  padding-top: 2px;
  border: 1px solid;
  border-color: #bdbbb6 #f6f5f2 #f6f5f2 #f6f5f2;
}

.nav-style {
  width: 92px;
  padding-left: 23px;
  gap: 7px;
  margin-right: 4px;
}

.mini-arrow {
  border-left: 3.5px solid transparent;
  border-right: 3.5px solid transparent;
  border-top: 4px solid #222;
  margin-left: -3px;
}

.size-box {
  width: 171px;
  justify-content: center;
  white-space: nowrap;
}

.grip {
  position: absolute;
  right: 1px;
  bottom: 1px;
}
</style>
